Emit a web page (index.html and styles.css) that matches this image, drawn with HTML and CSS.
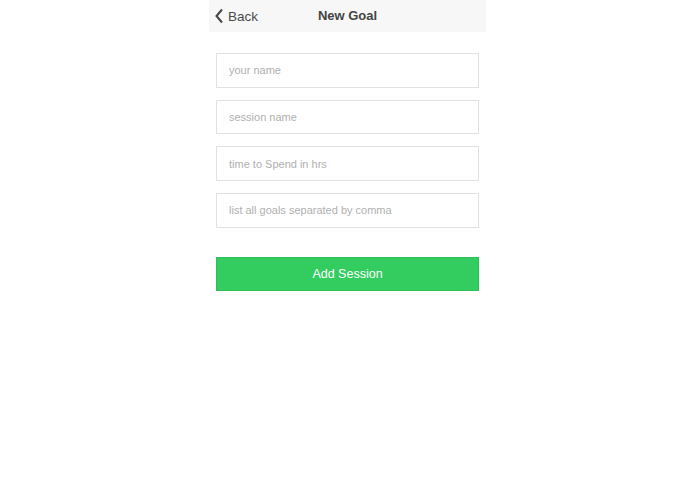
FILE: index.html
```html
<!DOCTYPE html>
<html>
<head>
<meta charset="utf-8">
<link rel="stylesheet" href="styles.css">
</head>
<body>
<div class="app">
  <header class="bar">
    <a class="back">
      <svg class="chev" width="10" height="16" viewBox="0 0 10 16"><path d="M8 1.5 L2.5 8 L8 14.5" fill="none" stroke="#444" stroke-width="2"/></svg>
      <span>Back</span>
    </a>
    <div class="title">New Goal</div>
  </header>
  <form class="form">
    <input class="field" placeholder="your name">
    <input class="field" placeholder="session name">
    <input class="field" placeholder="time to Spend in hrs">
    <input class="field" placeholder="list all goals separated by comma">
    <button type="button" class="submit">Add Session</button>
  </form>
</div>
</body>
</html>
```
FILE: styles.css
```css
* { box-sizing: border-box; }
html, body { margin: 0; padding: 0; background: #fff; }
body { font-family: "Liberation Sans", Arial, sans-serif; }
.app { width: 277px; margin: 0 auto; }
.bar {
  position: relative;
  height: 32px;
  background: #f7f7f7;
  display: flex;
  align-items: center;
}
.back {
  display: flex;
  align-items: center;
  gap: 4px;
  padding-left: 5px;
  color: #4a4a4a;
  font-size: 13.5px;
}
.chev { display: block; }
.title {
  position: absolute;
  left: 0; right: 0; top: 0;
  line-height: 32px;
  text-align: center;
  font-size: 13px;
  font-weight: bold;
  color: #444;
  pointer-events: none;
}
.form {
  padding: 21px 7px 0;
  display: flex;
  flex-direction: column;
  gap: 12px;
}
.field {
  display: block;
  width: 100%;
  height: 34.7px;
  margin: 0;
  border: 1px solid #e2e2e2;
  padding: 0 12px;
  font-family: "Liberation Sans", Arial, sans-serif;
  font-size: 11px;
  color: #333;
  outline: none;
  border-radius: 0;
}
.field::placeholder { color: #b0b0b0; }
.submit {
  margin-top: 17px;
  height: 34px;
  width: 100%;
  border: 1px solid #2fbf59;
  background: #33cd5f;
  color: #fff;
  font-family: "Liberation Sans", Arial, sans-serif;
  font-size: 12.5px;
  padding: 0;
  border-radius: 0;
}
```
